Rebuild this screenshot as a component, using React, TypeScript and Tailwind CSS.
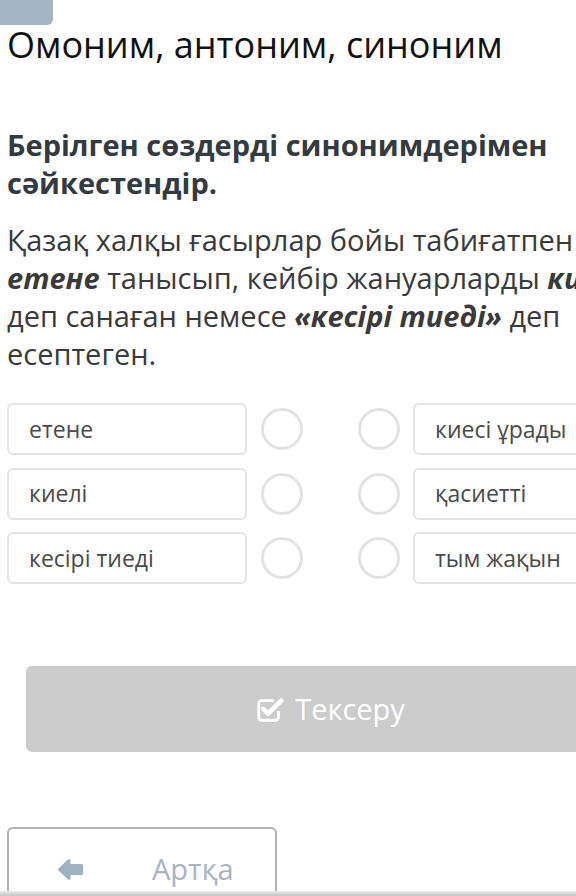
const left = ['етене', 'киелі', 'кесірі тиеді'];
const right = ['киесі ұрады', 'қасиетті', 'тым жақын'];

const CheckSquare = () => (
  <svg width="30" height="30" viewBox="0 0 32 32" fill="none" stroke="currentColor">
    <path d="M25 18v7a3 3 0 0 1-3 3H7a3 3 0 0 1-3-3V10a3 3 0 0 1 3-3h13" strokeWidth="3" />
    <path d="M9 16l5 5L28 7" strokeWidth="5" strokeLinecap="round" strokeLinejoin="round" />
  </svg>
);

// chunky back arrow, like the old font-awesome one
const BackArrow = () => (
  <svg width="27" height="25" viewBox="0 0 27 25" fill="currentColor" stroke="currentColor" strokeWidth="3" strokeLinejoin="round">
    <path d="M2.5 12.5L12 3.5V8.5H24.5V16.5H12V21.5Z" />
  </svg>
);

const MatchRow = (props: { a: string; b: string }) => {
  return (
    <div className="flex items-center h-[52px]">
      <div className="w-[240px] h-full rounded-md border-2 border-[#e4e4e4] flex items-center pl-[20px] text-[23px] text-[#4a4a4a]">
        {props.a}
      </div>
      <div className="w-[42px] h-[42px] rounded-full border-[3px] border-[#e2e2e2] ml-[14px]" />
      <div className="w-[42px] h-[42px] rounded-full border-[3px] border-[#e2e2e2] ml-[55px]" />
      <div className="w-[240px] h-full rounded-md border-2 border-[#e4e4e4] flex items-center pl-[20px] text-[23px] text-[#4a4a4a] ml-[13px]">
        {props.b}
      </div>
    </div>
  );
};

export default function App() {
  return (
    <div className="w-[576px] h-[896px] overflow-hidden bg-white relative" style={{ fontFamily: '"Open Sans", sans-serif' }}>
      <div className="w-[660px]">
        <div className="w-[53px] h-[25px] bg-[#a3b6c6] rounded-br-md" />
        <h1 className="px-[7px] text-[36px] leading-[40px] text-[#111]">Омоним, антоним, синоним</h1>

        <h2 className="px-[7px] mt-[61px] text-[29px] leading-[38px] font-bold text-[#333a40]">
          Берілген сөздерді синонимдерімен сәйкестендір.
        </h2>

        <p className="px-[7px] mt-[19px] text-[29px] leading-[38px] text-[#3a3a3a]">
          Қазақ халқы ғасырлар бойы табиғатпен <b><i>етене</i></b> танысып, кейбір жануарларды <b><i>киелі</i></b> деп санаған немесе <b><i>«кесірі тиеді»</i></b> деп есептеген.
        </p>

        <div className="px-[7px] mt-[30px] flex flex-col gap-[12.5px]">
          {left.map((a, i) => (
            <MatchRow key={a} a={a} b={right[i]} />
          ))}
        </div>

        <div className="mx-[26px] mt-[82px] h-[86px] rounded-md bg-[#cccccc] flex items-center justify-center gap-[10px] text-white text-[29px]">
          <CheckSquare />
          <span>Тексеру</span>
        </div>

        <div className="ml-[7px] mt-[75px] w-[270px] h-[80px] rounded-t-md border-2 border-[#b3b3b3] flex items-center pt-[4px]">
          <div className="ml-[48px] text-[#9fb2c2]">
            <BackArrow />
          </div>
          <span className="ml-[68px] text-[29px] text-[#a9b4be]">Артқа</span>
        </div>
      </div>
      <div className="absolute left-0 right-0 bottom-0 h-[5px] bg-gradient-to-b from-[#ececec] to-[#c4c4c4]" />
    </div>
  );
}
